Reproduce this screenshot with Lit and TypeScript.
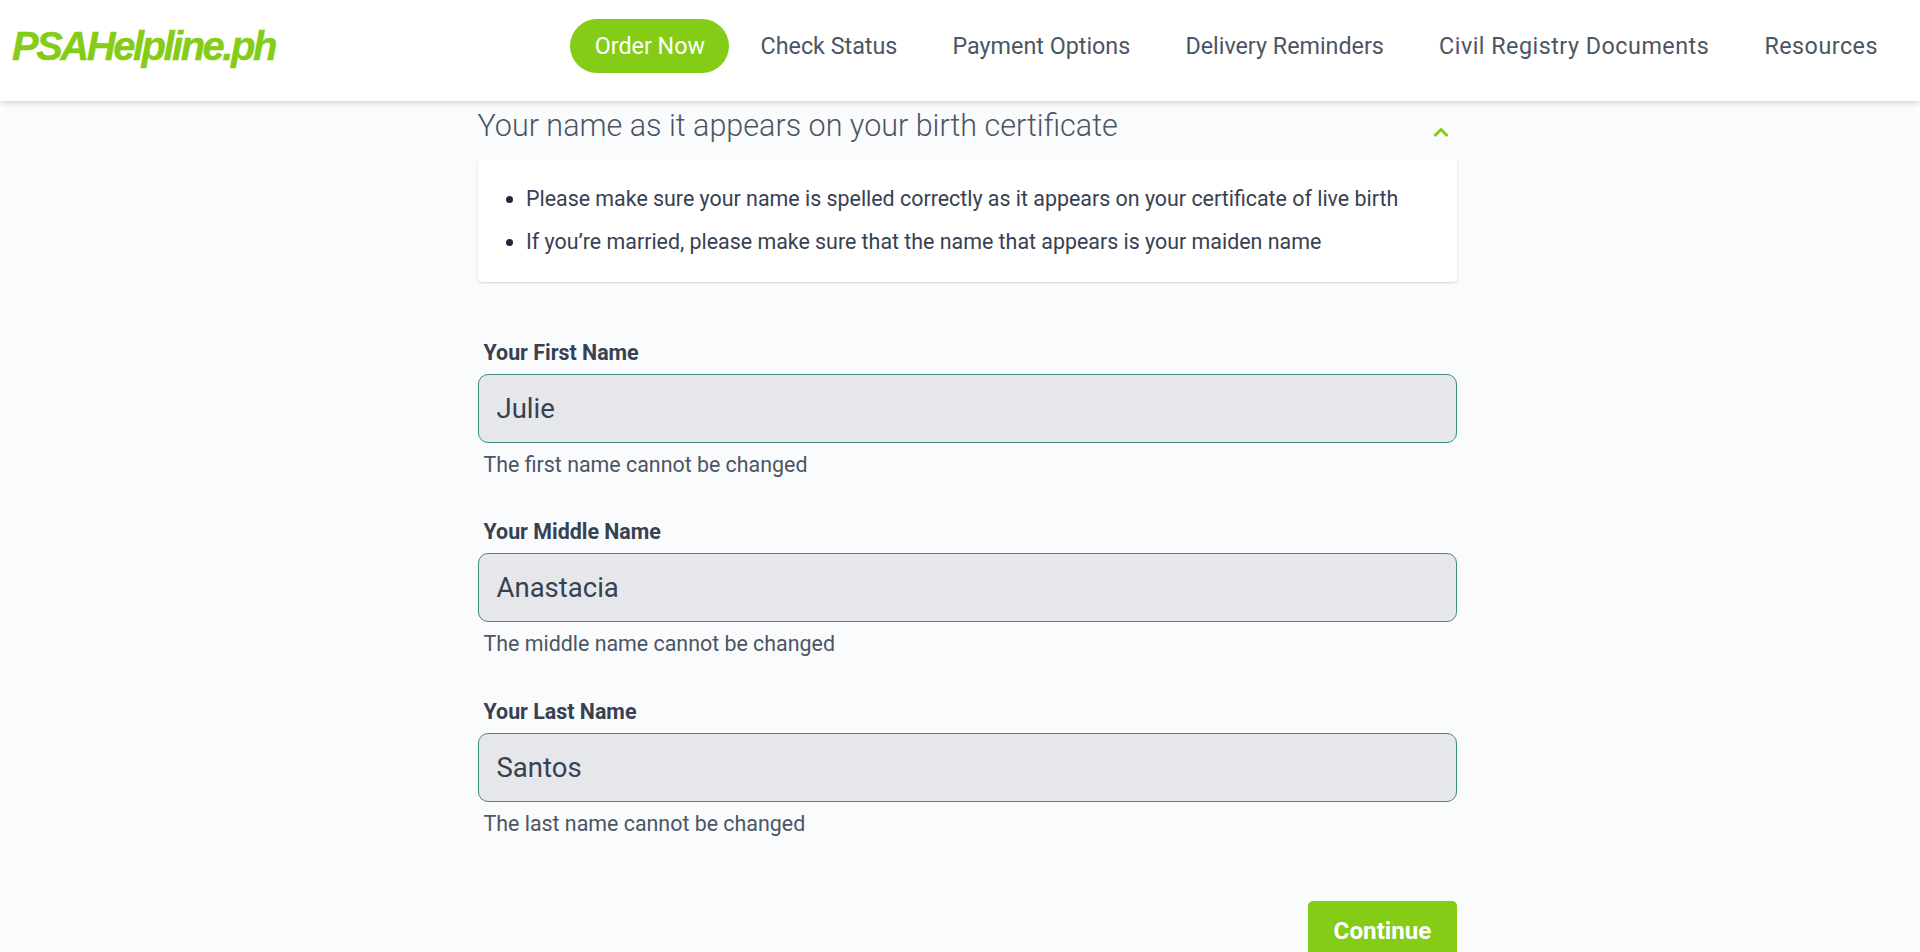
import { LitElement, html, css } from "lit";
import { customElement } from "lit/decorators.js";

const FIELDS = [
  { label: "Your First Name", value: "Julie", hint: "The first name cannot be changed" },
  { label: "Your Middle Name", value: "Anastacia", hint: "The middle name cannot be changed" },
  { label: "Your Last Name", value: "Santos", hint: "The last name cannot be changed" },
];

const NAV = [
  { text: "Check Status", wide: false },
  { text: "Payment Options", wide: false },
  { text: "Delivery Reminders", wide: false },
  { text: "Civil Registry Documents", wide: true },
  { text: "Resources", wide: true },
];

@customElement("app-root")
export class AppRoot extends LitElement {
  static styles = css`
    :host {
      display: block;
      height: 100vh;
      overflow: hidden;
      background: #fafbfd;
      color: #374151;
      font-family: Roboto, "Liberation Sans", sans-serif;
    }
    .header {
      height: 101px;
      box-sizing: border-box;
      background: #fff;
      box-shadow: 0 4px 6px -1px rgba(0, 0, 0, 0.1), 0 2px 4px -1px rgba(0, 0, 0, 0.06);
      display: flex;
      align-items: center;
      justify-content: space-between;
      padding: 0 42px 9px 12px;
      position: relative;
    }
    .logo {
      font-family: "Liberation Sans", Arial, sans-serif;
      font-style: italic;
      font-weight: 700;
      font-size: 40px;
      letter-spacing: -2.5px;
      -webkit-text-stroke: 0.4px #84cc16;
      color: #84cc16;
    }
    .nav {
      display: flex;
      align-items: center;
      gap: 55.2px;
      font-size: 23.3px;
      color: #4b5563;
    }
    .wide {
      letter-spacing: 0.5px;
    }
    .pill {
      background: #84cc16;
      color: #fff;
      height: 54px;
      width: 159px;
      border-radius: 27px;
      display: flex;
      align-items: center;
      justify-content: center;
      margin-right: -24px;
    }
    .main {
      width: 979.5px;
      margin-left: 477.5px;
    }
    .title {
      display: flex;
      justify-content: space-between;
      align-items: center;
      height: 58px;
      box-sizing: border-box;
      padding-bottom: 10px;
    }
    .title h2 {
      margin: 0;
      font-size: 30.5px;
      font-weight: 300;
      color: #4b5563;
    }
    .title svg {
      margin: 13px 8px 0 0;
    }
    .card {
      background: #fff;
      border-radius: 4px;
      box-shadow: 0 1px 3px rgba(0, 0, 0, 0.1), 0 1px 2px rgba(0, 0, 0, 0.06);
      height: 123px;
      box-sizing: border-box;
      padding: 18px 0 0 48.5px;
      font-size: 21.4px;
    }
    .card ul {
      margin: 0;
      padding: 0;
    }
    .card li {
      height: 43px;
      line-height: 43px;
    }
    .card li::marker {
      color: #1f2937;
    }
    .fields {
      margin-top: 57.5px;
      display: flex;
      flex-direction: column;
      gap: 41.5px;
    }
    .label {
      font-size: 21.4px;
      font-weight: 700;
      line-height: 26px;
      padding-left: 6px;
      margin-bottom: 8px;
    }
    .input {
      height: 69px;
      box-sizing: border-box;
      background: #e5e7eb;
      border: 1.5px solid #3c8f70;
      border-radius: 10px;
      display: flex;
      align-items: center;
      padding-left: 18px;
      font-size: 27.5px;
    }
    .hint {
      font-size: 21.4px;
      line-height: 26px;
      padding-left: 6px;
      margin-top: 9px;
      color: #4b5563;
    }
    .actions {
      display: flex;
      justify-content: flex-end;
      margin-top: 64.5px;
    }
    .btn {
      width: 149px;
      height: 60px;
      flex: none;
      background: #84cc16;
      color: #fff;
      border-radius: 5px;
      font-size: 24.2px;
      font-weight: 700;
      display: flex;
      align-items: center;
      justify-content: center;
    }
  `;

  render() {
    return html`
      <header class="header">
        <div class="logo">PSAHelpline.ph</div>
        <nav class="nav">
          <span class="pill">Order Now</span>
          ${NAV.map((n) => html`<span class=${n.wide ? "wide" : ""}>${n.text}</span>`)}
        </nav>
      </header>
      <main class="main">
        <div class="title">
          <h2>Your name as it appears on your birth certificate</h2>
          <svg width="16" height="10" viewBox="0 0 16 10" fill="none" stroke="#84cc16" stroke-width="3">
            <path d="M1.5 9 L8 2.5 L14.5 9" />
          </svg>
        </div>
        <div class="card">
          <ul>
            <li>Please make sure your name is spelled correctly as it appears on your certificate of live birth</li>
            <li>If you’re married, please make sure that the name that appears is your maiden name</li>
          </ul>
        </div>
        <div class="fields">
          ${FIELDS.map(
            (f) => html`
              <div>
                <div class="label">${f.label}</div>
                <div class="input">${f.value}</div>
                <div class="hint">${f.hint}</div>
              </div>
            `
          )}
        </div>
        <div class="actions"><div class="btn">Continue</div></div>
      </main>
    `;
  }
}
